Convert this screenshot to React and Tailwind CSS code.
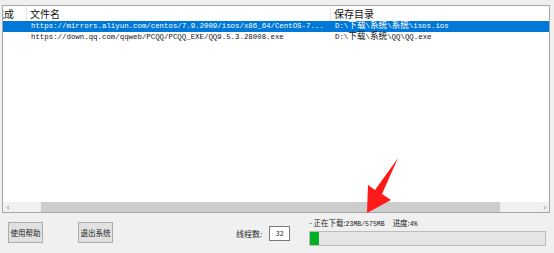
import React from 'react';

const rows = [
    { url: 'https://mirrors.aliyun.com/centos/7.9.2009/isos/x86_64/CentOS-7...', dir: 'D:\\下载\\系统\\系统\\isos.ios', sel: true },
    { url: 'https://down.qq.com/qqweb/PCQQ/PCQQ_EXE/QQ9.5.3.28008.exe', dir: 'D:\\下载\\系统\\QQ\\QQ.exe', sel: false },
];

// ascii in mono, chinese a little bigger like SimSun
const Mixed = ({ text }) => {
    const parts = text.split(/([\u4e00-\u9fff]+)/).filter(Boolean);
    return (
        <>
            {parts.map((p, i) =>
                /[\u4e00-\u9fff]/.test(p)
                    ? <span key={i} className="text-[8.6px]">{p}</span>
                    : <span key={i}>{p}</span>
            )}
        </>
    );
};

const Btn = ({ children, className }) => (
    <div className={"h-[21px] w-[35px] flex items-center justify-center bg-[#e1e1e1] border border-[#adadad] text-[7.5px] text-[#222] " + className}>
        {children}
    </div>
);

const App = () => {
    return (
        <div className="relative w-[554px] h-[253px] bg-[#f0f0f0] overflow-hidden" style={{ fontFamily: '"Noto Sans CJK SC", sans-serif' }}>
            {/* list (scrolled a bit to the right, so first column is cut) */}
            <div className="ml-[2px] mt-[5px] w-[548px] h-[208px] border border-[#a7a7a7] bg-white flex flex-col">
                <div className="h-[15px] flex text-[10px] leading-[15px] text-[#111]">
                    <div className="w-[24px] overflow-hidden border-r border-[#e5e5e5]">
                        <span className="block -ml-[9px] whitespace-nowrap">完成</span>
                    </div>
                    <div className="w-[304px] pl-[3px] border-r border-[#e5e5e5]">文件名</div>
                    <div className="pl-[3px]">保存目录</div>
                </div>
                {rows.map((r, i) => (
                    <div key={i} className={"h-[11px] flex text-[7.4px] leading-[11px] whitespace-nowrap " + (r.sel ? 'bg-[#0078d7] text-white' : 'text-[#111]')} style={{ fontFamily: '"Liberation Mono", "Noto Sans CJK SC", monospace' }}>
                        <div className="w-[25px]"></div>
                        <div className="w-[304px] pl-[3px] overflow-hidden">{r.url}</div>
                        <div className="pl-[3px]"><Mixed text={r.dir} /></div>
                    </div>
                ))}
                <div className="flex-1"></div>
                {/* horizontal scrollbar */}
                <div className="h-[10px] flex bg-[#f0f0f0] items-center">
                    <div className="w-[38px] h-full flex items-center pl-[4px] text-[8px] text-[#555]">‹</div>
                    <div className="w-[459px] h-full bg-[#cdcdcd]"></div>
                    <div className="flex-1 h-full flex items-center justify-end pr-[3px] text-[8px] text-[#555]">›</div>
                </div>
            </div>

            {/* bottom bar */}
            <div className="flex items-start">
                <Btn className="ml-[8px] mt-[9px]">使用帮助</Btn>
                <Btn className="ml-[35px] mt-[9px]">退出系统</Btn>
                <div className="ml-[123px] mt-[14px] text-[8px] leading-[13px] text-[#222]">线程数:</div>
                <div className="ml-[7px] mt-[13px] w-[21px] h-[15px] bg-white border border-[#7a7a7a] flex items-center justify-center text-[7px] text-[#222]">32</div>
                <div className="ml-[19px] mt-[4px] flex flex-col">
                    <div className="h-[12px] text-[7.5px] leading-[12px] text-[#222] whitespace-nowrap">
                        - 正在下载:<span style={{ fontFamily: '"Liberation Mono", monospace' }} className="text-[6.5px]">23MB/575MB</span>
                        <span className="ml-[8px]">进度:</span><span style={{ fontFamily: '"Liberation Mono", monospace' }} className="text-[6.5px]">4%</span>
                    </div>
                    <div className="mt-[2px] w-[237px] h-[15px] bg-[#e6e6e6] border border-[#bcbcbc] flex">
                        <div className="w-[9px] h-full bg-[#06b025]"></div>
                    </div>
                </div>
            </div>

            {/* red arrow drawn on top */}
            <svg className="absolute left-0 top-0 pointer-events-none" width="554" height="253">
                <polygon points="398,158 382,194 391,200 367,213 368,185 375,190" fill="#ff1a1a" />
            </svg>
        </div>
    );
};

export default App;
